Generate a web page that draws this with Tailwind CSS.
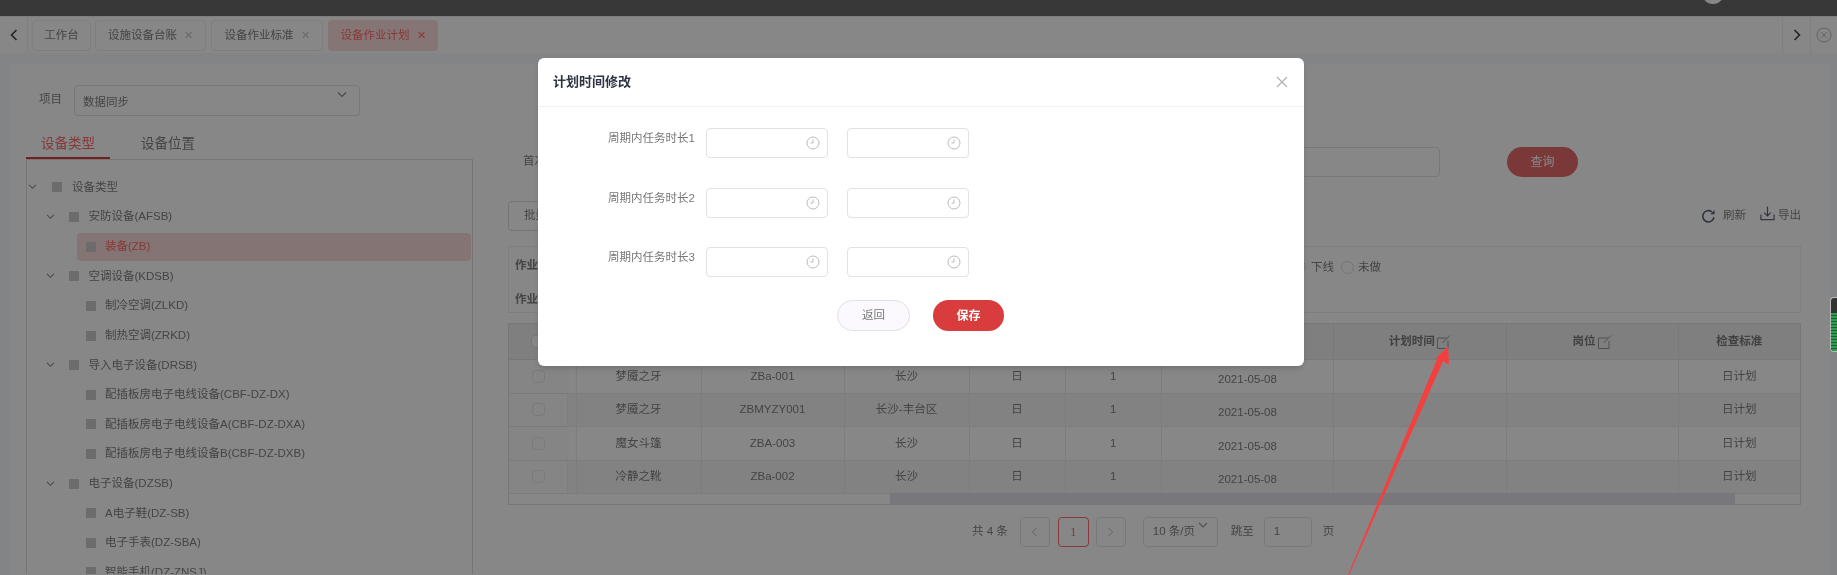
<!DOCTYPE html>
<html lang="zh">
<head>
  <meta charset="UTF-8" />
  <title>设备作业计划</title>
  <script src="https://cdn.jsdelivr.net/npm/@tailwindcss/browser@4"></script>
</head>
<body class="bg-[#f7fafc]">
<div class="relative w-[1837px] h-[575px] overflow-hidden bg-[#f7fafc] text-[#808080] text-[11.5px] blur-[0.4px] font-['Liberation_Sans','Noto_Sans_CJK_SC',sans-serif]">

  <!-- top bar -->
  <div class="relative h-[16px] bg-[#6a6a6a] overflow-hidden">
    <div class="absolute left-[1702px] top-[-18px] w-[22px] h-[22px] rounded-full bg-[#fff]"></div>
  </div>

  <!-- tabs -->
  <div class="flex h-[37px] bg-white items-start border-t border-[#f0f0f0]">
    <div class="w-[28px] h-full flex items-center justify-center border-r border-[#f0f0f0]">
      <svg width="8" height="12" viewBox="0 0 8 12" fill="none" stroke="#444" stroke-width="1.6"><path d="M6.5 1 1.5 6l5 5"/></svg>
    </div>
    <div class="ml-[4px] mt-[3px] w-[59px] h-[31px] flex items-center justify-center rounded border border-[#eee]">工作台</div>
    <div class="ml-[4px] mt-[3px] w-[111px] h-[31px] flex items-center justify-center gap-[7px] rounded border border-[#eee]">设施设备台账<span class="text-[#c4c4c4] text-[11px]">✕</span></div>
    <div class="ml-[5px] mt-[3px] w-[112px] h-[31px] flex items-center justify-center gap-[7px] rounded border border-[#eee]">设备作业标准<span class="text-[#c4c4c4] text-[11px]">✕</span></div>
    <div class="ml-[5px] mt-[3px] w-[110px] h-[31px] flex items-center justify-center gap-[7px] rounded bg-[#fbdede] text-[#ff6a6a]">设备作业计划<span class="text-[#ff6a6a] text-[11px]">✕</span></div>
    <div class="ml-auto w-[28px] h-full flex items-center justify-center border-l border-[#f0f0f0]">
      <svg width="8" height="12" viewBox="0 0 8 12" fill="none" stroke="#444" stroke-width="1.6"><path d="M1.5 1l5 5-5 5"/></svg>
    </div>
    <div class="w-[27px] h-full flex items-center justify-center border-l border-[#f0f0f0]">
      <svg width="16" height="16" viewBox="0 0 16 16" fill="none" stroke="#bbb" stroke-width="1"><circle cx="8" cy="8" r="7"/><path d="M5.2 5.2l5.6 5.6M10.8 5.2l-5.6 5.6"/></svg>
    </div>
  </div>

  <!-- page -->
  <div class="flex mt-[11px] ml-[10px] mr-[7px] h-[511px] bg-white">
    <!-- left -->
    <div class="w-[463px] shrink-0 pl-[16px]">
      <div class="flex items-start pt-[21px] pl-[13px]">
        <span class="w-[35px] pt-[6px]">项目</span>
        <div class="relative w-[286px] h-[31px] rounded border border-[#e2e2e2] pl-[8px] pt-[8px]">
          数据同步
          <svg class="absolute right-[12px] top-[5px]" width="10" height="7" viewBox="0 0 10 7" fill="none" stroke="#888" stroke-width="1.1"><path d="M1 1.5l4 4 4-4"/></svg>
        </div>
      </div>
      <div class="flex h-[43px] items-end">
        <div class="w-[84px] h-[33px] border-b-2 border-[#d93d3d] text-[#ff6a6a] text-[13.5px] pl-[15px] pt-[8px] leading-[20px]">设备类型</div>
        <div class="ml-[31px] h-[33px] text-[13.5px] pt-[8px] leading-[20px]">设备位置</div>
      </div>
      <div class="border border-[#ddd] border-b-0 w-[447px] h-[415px] pt-[12.5px] overflow-hidden">
        <div class="flex items-center h-[29.6px]"><svg class="ml-[1px]" width="9" height="6" viewBox="0 0 10 7" fill="none" stroke="#888" stroke-width="1.2"><path d="M1 1l4 4 4-4"/></svg><span class="ml-[15px] w-[10px] h-[10px] bg-[#ccc]"></span><span class="ml-[10px]">设备类型</span></div>
        <div class="flex items-center h-[29.6px] pl-[19px]"><svg width="9" height="6" viewBox="0 0 10 7" fill="none" stroke="#888" stroke-width="1.2"><path d="M1 1l4 4 4-4"/></svg><span class="ml-[14px] w-[10px] h-[10px] bg-[#ccc]"></span><span class="ml-[9.5px]">安防设备(AFSB)</span></div>
        <div class="flex items-center h-[28px] ml-[50px] mr-[1px] my-[1px] pl-[9px] rounded-sm bg-[#fbdcdc] text-[#ff6a6a]"><span class="w-[10px] h-[10px] bg-[#ccc]"></span><span class="ml-[9px]">装备(ZB)</span></div>
        <div class="flex items-center h-[29.6px] pl-[19px]"><svg width="9" height="6" viewBox="0 0 10 7" fill="none" stroke="#888" stroke-width="1.2"><path d="M1 1l4 4 4-4"/></svg><span class="ml-[14px] w-[10px] h-[10px] bg-[#ccc]"></span><span class="ml-[9.5px]">空调设备(KDSB)</span></div>
        <div class="flex items-center h-[29.6px] pl-[59px]"><span class="w-[10px] h-[10px] bg-[#ccc]"></span><span class="ml-[9px]">制冷空调(ZLKD)</span></div>
        <div class="flex items-center h-[29.6px] pl-[59px]"><span class="w-[10px] h-[10px] bg-[#ccc]"></span><span class="ml-[9px]">制热空调(ZRKD)</span></div>
        <div class="flex items-center h-[29.6px] pl-[19px]"><svg width="9" height="6" viewBox="0 0 10 7" fill="none" stroke="#888" stroke-width="1.2"><path d="M1 1l4 4 4-4"/></svg><span class="ml-[14px] w-[10px] h-[10px] bg-[#ccc]"></span><span class="ml-[9.5px]">导入电子设备(DRSB)</span></div>
        <div class="flex items-center h-[29.6px] pl-[59px]"><span class="w-[10px] h-[10px] bg-[#ccc]"></span><span class="ml-[9px]">配插板房电子电线设备(CBF-DZ-DX)</span></div>
        <div class="flex items-center h-[29.6px] pl-[59px]"><span class="w-[10px] h-[10px] bg-[#ccc]"></span><span class="ml-[9px]">配插板房电子电线设备A(CBF-DZ-DXA)</span></div>
        <div class="flex items-center h-[29.6px] pl-[59px]"><span class="w-[10px] h-[10px] bg-[#ccc]"></span><span class="ml-[9px]">配插板房电子电线设备B(CBF-DZ-DXB)</span></div>
        <div class="flex items-center h-[29.6px] pl-[19px]"><svg width="9" height="6" viewBox="0 0 10 7" fill="none" stroke="#888" stroke-width="1.2"><path d="M1 1l4 4 4-4"/></svg><span class="ml-[14px] w-[10px] h-[10px] bg-[#ccc]"></span><span class="ml-[9.5px]">电子设备(DZSB)</span></div>
        <div class="flex items-center h-[29.6px] pl-[59px]"><span class="w-[10px] h-[10px] bg-[#ccc]"></span><span class="ml-[9px]">A电子鞋(DZ-SB)</span></div>
        <div class="flex items-center h-[29.6px] pl-[59px]"><span class="w-[10px] h-[10px] bg-[#ccc]"></span><span class="ml-[9px]">电子手表(DZ-SBA)</span></div>
        <div class="flex items-center h-[29.6px] pl-[59px]"><span class="w-[10px] h-[10px] bg-[#ccc]"></span><span class="ml-[9px]">智能手机(DZ-ZNSJ)</span></div>
      </div>
    </div>

    <!-- right -->
    <div class="ml-[35px] w-[1293px] shrink-0">
      <div class="flex items-center mt-[83px] h-[30px]">
        <span class="ml-[15px]">首次时间</span>
        <div class="ml-auto w-[700px] h-[30px] rounded border border-[#e2e2e2]"></div>
        <div class="ml-[67px] mr-[223px] w-[71px] h-[30px] rounded-full bg-[#e96a6a] text-white text-[12px] flex items-center justify-center">查询</div>
      </div>
      <div class="flex items-center mt-[24px] h-[30px]">
        <div class="w-[70px] h-[30px] rounded border border-[#ddd] flex items-center pl-[15px]">批量修改</div>
        <svg class="ml-auto" width="15" height="15" viewBox="0 0 16 16" fill="none" stroke="#55667a" stroke-width="1.7"><path d="M13.8 8.800A6 6 0 1 1 11.500 3"/><path d="M14.500 1v4.600H9.800z" fill="#55667a" stroke="none"/></svg>
        <span class="ml-[7px]">刷新</span>
        <svg class="ml-[14px] mb-[6px]" width="15" height="15" viewBox="0 0 16 16" fill="none" stroke="#667" stroke-width="1.3"><path d="M1 9v5.500h14V9M8 .5V10M4.500 7 8 10.500 11.500 7"/></svg>
        <span class="ml-[3px]">导出</span>
      </div>
      <div class="mt-[15px] h-[67px] border border-[#eee] relative">
        <div class="font-bold pl-[6px] pt-[10px]">作业类型</div>
        <div class="font-bold pl-[6px] pt-[17px]">作业状态</div>
        <div class="absolute left-[784px] top-[13px] w-[13px] h-[13px] rounded-full border border-[#ddd]"></div>
        <div class="absolute left-[802px] top-[12px] flex items-center">
          <span>下线</span><span class="ml-[7px] w-[13px] h-[13px] rounded-full border border-[#ddd]"></span><span class="ml-[4px]">未做</span>
        </div>
      </div>
      <div class="mt-[10px] h-[182px] border border-[#e0e0e0] relative">
        <div class="grid grid-cols-[67.5px_125px_143px_125px_96px_96.5px_172px_172.5px_172px_1fr] h-[36px] bg-[#f0f0f0] border-b border-[#e4e4e4] font-bold text-[#7a7a7a]">
          <div class="flex items-center pl-[22px]"><span class="w-[13px] h-[13px] border border-[#ddd] rounded-sm bg-white"></span></div>
          <div></div><div></div><div></div><div></div><div></div><div class="border-r border-[#e4e4e4]"></div>
          <div class="border-r border-[#e4e4e4] flex items-center justify-center gap-[2px]">计划时间<svg width="14" height="14" viewBox="0 0 14 14" fill="none" stroke="#999" stroke-width="1"><path d="M10 3H.5v10.500H11V6M5.500 8 13 .5"/></svg></div>
          <div class="border-r border-[#e4e4e4] flex items-center justify-center gap-[2px]">岗位<svg width="14" height="14" viewBox="0 0 14 14" fill="none" stroke="#999" stroke-width="1"><path d="M10 3H.5v10.500H11V6M5.500 8 13 .5"/></svg></div>
          <div class="flex items-center justify-center">检查标准</div>
        </div>
        <div id="rows"></div>
        <div class="absolute left-[381px] right-[65px] bottom-0 h-[11px] bg-[#e2e2ea]"></div>
      </div>
      <div class="flex items-center mt-[12px] h-[30px]">
        <span class="ml-[464px]">共 4 条</span>
        <span class="ml-[12px] w-[30px] h-[30px] rounded border border-[#e4e4e4] flex items-center justify-center"><svg width="7" height="10" viewBox="0 0 7 10" fill="none" stroke="#bbb"><path d="M5.500 1 1.500 5l4 4"/></svg></span>
        <span class="ml-[8px] w-[31px] h-[30px] rounded border border-[#ff6a6a] text-[#ff6a6a] text-[13px] font-['Liberation_Serif',serif] flex items-center justify-center">1</span>
        <span class="ml-[7px] w-[30px] h-[30px] rounded border border-[#e4e4e4] flex items-center justify-center"><svg width="7" height="10" viewBox="0 0 7 10" fill="none" stroke="#bbb"><path d="M1.500 1l4 4-4 4"/></svg></span>
        <span class="relative ml-[17px] w-[75px] h-[30px] rounded border border-[#e4e4e4] flex items-center pl-[9px]">10 条/页<svg class="absolute right-[9px] top-[4px]" width="10" height="7" viewBox="0 0 10 7" fill="none" stroke="#999" stroke-width="1.1"><path d="M1 1l4 4 4-4"/></svg></span>
        <span class="ml-[13px]">跳至</span>
        <span class="ml-[10px] w-[48px] h-[30px] rounded border border-[#e4e4e4] flex items-center pl-[9px]">1</span>
        <span class="ml-[11px]">页</span>
      </div>
    </div>
  </div>

  <!-- mask -->
  <div class="absolute inset-0 bg-black/[.47]"></div>

  <!-- modal -->
  <div class="absolute left-[538px] top-[58px] w-[766px] h-[308px] bg-white rounded-md shadow-md text-[#777]">
    <div class="flex items-center justify-between h-[49px] border-b border-[#f2f2f2] pl-[15px] pr-[16px]">
      <span class="font-bold text-[13px] text-[#2f3542]">计划时间修改</span>
      <svg width="12" height="12" viewBox="0 0 12 12" fill="none" stroke="#b0b0b0" stroke-width="1.1"><path d="M1 1l10 10M11 1 1 11"/></svg>
    </div>
    <div class="flex flex-col gap-[29.5px] mt-[21px]">
      <div class="flex items-start h-[30px]">
        <span class="ml-[70px] w-[98px] pt-[2px]">周期内任务时长1</span>
        <div class="w-[122px] h-[30px] border border-[#e2e2e2] rounded flex items-center justify-end pr-[7px]"><svg width="14" height="14" viewBox="0 0 14 14" fill="none" stroke="#bbb"><circle cx="7" cy="7" r="6"/><path d="M7 3.500V7H4.500"/></svg></div>
        <div class="ml-[19px] w-[122px] h-[30px] border border-[#e2e2e2] rounded flex items-center justify-end pr-[7px]"><svg width="14" height="14" viewBox="0 0 14 14" fill="none" stroke="#bbb"><circle cx="7" cy="7" r="6"/><path d="M7 3.500V7H4.500"/></svg></div>
      </div>
      <div class="flex items-start h-[30px]">
        <span class="ml-[70px] w-[98px] pt-[2px]">周期内任务时长2</span>
        <div class="w-[122px] h-[30px] border border-[#e2e2e2] rounded flex items-center justify-end pr-[7px]"><svg width="14" height="14" viewBox="0 0 14 14" fill="none" stroke="#bbb"><circle cx="7" cy="7" r="6"/><path d="M7 3.500V7H4.500"/></svg></div>
        <div class="ml-[19px] w-[122px] h-[30px] border border-[#e2e2e2] rounded flex items-center justify-end pr-[7px]"><svg width="14" height="14" viewBox="0 0 14 14" fill="none" stroke="#bbb"><circle cx="7" cy="7" r="6"/><path d="M7 3.500V7H4.500"/></svg></div>
      </div>
      <div class="flex items-start h-[30px]">
        <span class="ml-[70px] w-[98px] pt-[2px]">周期内任务时长3</span>
        <div class="w-[122px] h-[30px] border border-[#e2e2e2] rounded flex items-center justify-end pr-[7px]"><svg width="14" height="14" viewBox="0 0 14 14" fill="none" stroke="#bbb"><circle cx="7" cy="7" r="6"/><path d="M7 3.500V7H4.500"/></svg></div>
        <div class="ml-[19px] w-[122px] h-[30px] border border-[#e2e2e2] rounded flex items-center justify-end pr-[7px]"><svg width="14" height="14" viewBox="0 0 14 14" fill="none" stroke="#bbb"><circle cx="7" cy="7" r="6"/><path d="M7 3.500V7H4.500"/></svg></div>
      </div>
    </div>
    <div class="flex mt-[23px] ml-[299px] gap-[23px]">
      <div class="w-[73px] h-[31px] rounded-full border border-[#e2dfe6] bg-[#fbf9fd] flex items-center justify-center">返回</div>
      <div class="w-[71px] h-[31px] rounded-full bg-[#d83c3c] text-white font-bold text-[12px] flex items-center justify-center">保存</div>
    </div>
  </div>

  <!-- red annotation arrow -->
  <svg class="absolute left-0 top-0 pointer-events-none" width="1837" height="575" viewBox="0 0 1837 575">
    <polygon points="1448,346 1449,365 1443,361 1349,575 1348,575 1438,357 1434,360" fill="#f53f3f"/>
  </svg>

  <!-- side widget -->
  <div class="absolute right-0 top-[297px] w-[7px] h-[55px] rounded-l border border-r-0 border-[#bbb] bg-[#333] overflow-hidden">
    <div class="mt-[15px] h-[40px] bg-[repeating-linear-gradient(#2f9e4f_0,#2f9e4f_2px,#1c5f30_2px,#1c5f30_3px)]"></div>
  </div>
</div>
<script>
  const data = [
    ['梦魇之牙', 'ZBa-001', '长沙'],
    ['梦魇之牙', 'ZBMYZY001', '长沙-丰台区'],
    ['魔女斗篷', 'ZBA-003', '长沙'],
    ['冷静之靴', 'ZBa-002', '长沙']
  ];
  document.getElementById('rows').innerHTML = data.map((r, i) => `
    <div class="grid grid-cols-[67.5px_125px_143px_125px_96px_96.5px_172px_172.5px_172px_1fr] h-[33.5px] border-b border-[#ececec] ${i % 2 ? 'bg-[#f6f6f6]' : ''} [&>div]:flex [&>div]:items-center [&>div]:justify-center [&>div]:border-r [&>div]:border-[#ececec]">
      <div class="!justify-start"><span class="w-[58px] h-full flex items-center justify-center bg-[#fbfbfb] shadow-[1px_0_2px_rgba(0,0,0,.04)]"><span class="w-[13px] h-[13px] border border-[#e6e6e6] rounded-sm"></span></span></div>
      <div>${r[0]}</div><div>${r[1]}</div><div>${r[2]}</div><div>日</div><div>1</div>
      <div class="pt-[6px]">2021-05-08</div><div></div><div></div><div class="!border-r-0">日计划</div>
    </div>`).join('');
</script>
</body>
</html>
